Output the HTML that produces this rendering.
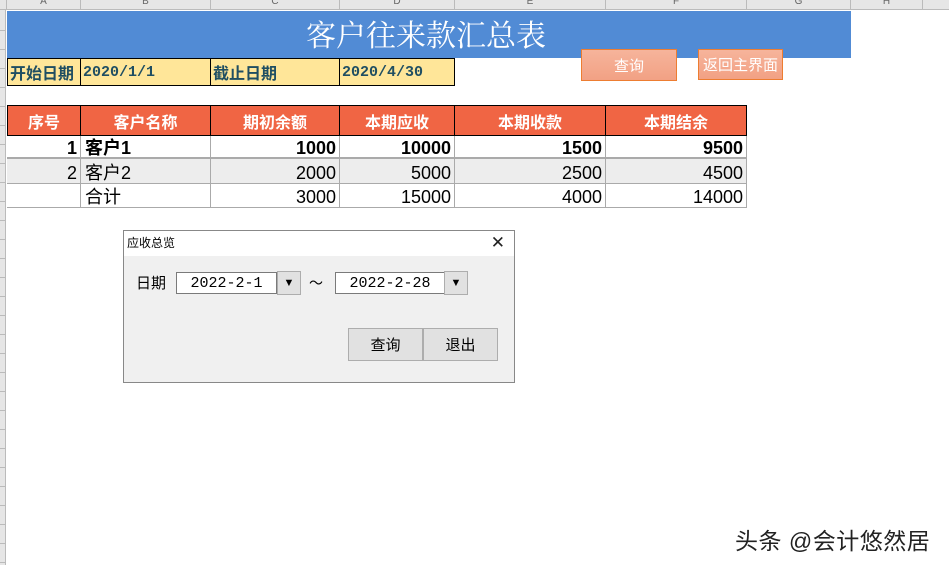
<!DOCTYPE html>
<html><head><meta charset="utf-8"><style>
*{margin:0;padding:0;box-sizing:border-box}
body{width:949px;height:565px;overflow:hidden;background:#fff;position:relative;font-family:"Liberation Sans","Noto Sans CJK SC",sans-serif}
.a{position:absolute}
.colh{position:absolute;top:0;height:10px;background:#e6e6e6;border-right:1px solid #bbb;border-bottom:1px solid #bbb;font-size:10px;color:#666;text-align:center;line-height:4px;overflow:hidden}
.c{position:absolute;display:flex;align-items:center;white-space:nowrap}
.y{background:#ffe699;border:1px solid #000;color:#1f4e62;font-weight:bold;font-size:16px;padding-left:2px}
.h{background:#f06544;border:1px solid #000;color:#fff;font-weight:bold;font-size:16px;justify-content:center}
.d{border-right:1px solid #aaa;font-size:18px;color:#000;justify-content:flex-end;align-items:flex-end;padding-right:3px;line-height:20px}
.l{justify-content:flex-start;padding-left:4px}
.btn{position:absolute;background:linear-gradient(#f6b49b,#f2a184);border:1px solid #ed7d31;color:#fff;font-size:15px;display:flex;align-items:center;justify-content:center}
.wb{position:absolute;background:#e1e1e1;border:1px solid #adadad;font-size:15px;display:flex;align-items:center;justify-content:center;color:#000}
.in{position:absolute;background:#fff;border:1px solid #7a7a7a;font-size:14px;display:flex;align-items:center;justify-content:center;font-family:"Liberation Mono",monospace}
.dd{position:absolute;background:#e1e1e1;border:1px solid #adadad;font-size:11px;display:flex;align-items:center;justify-content:center}
</style></head><body>
<div class="colh" style="left:0;width:7px;background:#e6e6e6"></div>
<div class="colh" style="left:7px;width:74px">A</div>
<div class="colh" style="left:81px;width:130px">B</div>
<div class="colh" style="left:211px;width:129px">C</div>
<div class="colh" style="left:340px;width:115px">D</div>
<div class="colh" style="left:455px;width:151px">E</div>
<div class="colh" style="left:606px;width:141px">F</div>
<div class="colh" style="left:747px;width:104px">G</div>
<div class="colh" style="left:851px;width:72px">H</div>
<div class="colh" style="left:923px;width:30px"></div>
<div class="a" style="left:0;top:10px;width:6px;height:555px;background:#e6e6e6;border-right:1px solid #bbb;background-image:repeating-linear-gradient(#e6e6e6 0,#e6e6e6 18px,#bbb 18px,#bbb 19px);background-position:0 2px"></div>

<div class="a" style="left:7px;top:11px;width:844px;height:47px;background:#518bd5;color:#fff;font-family:'Liberation Serif','Noto Serif CJK SC',serif;font-size:30px;text-align:center;line-height:52px;padding-right:6px">客户往来款汇总表</div>

<div class="c y" style="left:7px;top:58px;width:74px;height:28px">开始日期</div>
<div class="c y" style="left:80px;top:58px;width:131px;height:28px;font-family:'Liberation Mono',monospace;font-size:15px">2020/1/1</div>
<div class="c y" style="left:210px;top:58px;width:130px;height:28px">截止日期</div>
<div class="c y" style="left:339px;top:58px;width:116px;height:28px;font-family:'Liberation Mono',monospace;font-size:15px">2020/4/30</div>

<div class="btn" style="left:581px;top:49px;width:96px;height:32px">查询</div>
<div class="btn" style="left:698px;top:49px;width:85px;height:31px">返回主界面</div>

<div class="c h" style="left:7px;top:105px;width:74px;height:31px">序号</div>
<div class="c h" style="left:80px;top:105px;width:131px;height:31px">客户名称</div>
<div class="c h" style="left:210px;top:105px;width:130px;height:31px">期初余额</div>
<div class="c h" style="left:339px;top:105px;width:116px;height:31px">本期应收</div>
<div class="c h" style="left:454px;top:105px;width:152px;height:31px">本期收款</div>
<div class="c h" style="left:605px;top:105px;width:142px;height:31px">本期结余</div>

<div class="a" style="left:7px;top:136px;width:740px;height:23px;border-bottom:2px solid #aaa;font-weight:bold">
<div class="c d" style="left:0;width:74px;height:22px;font-weight:bold">1</div>
<div class="c d l" style="left:74px;width:130px;height:22px;font-weight:bold">客户1</div>
<div class="c d" style="left:204px;width:129px;height:22px;font-weight:bold">1000</div>
<div class="c d" style="left:333px;width:115px;height:22px;font-weight:bold">10000</div>
<div class="c d" style="left:448px;width:151px;height:22px;font-weight:bold">1500</div>
<div class="c d" style="left:599px;width:141px;height:22px;font-weight:bold">9500</div>
</div>
<div class="a" style="left:7px;top:159px;width:740px;height:25px;background:#ededed;border-bottom:1px solid #aaa">
<div class="c d" style="left:0;width:74px;height:24px">2</div>
<div class="c d l" style="left:74px;width:130px;height:24px">客户2</div>
<div class="c d" style="left:204px;width:129px;height:24px">2000</div>
<div class="c d" style="left:333px;width:115px;height:24px">5000</div>
<div class="c d" style="left:448px;width:151px;height:24px">2500</div>
<div class="c d" style="left:599px;width:141px;height:24px">4500</div>
</div>
<div class="a" style="left:7px;top:184px;width:740px;height:24px;border-bottom:1px solid #aaa">
<div class="c d" style="left:0;width:74px;height:23px"></div>
<div class="c d l" style="left:74px;width:130px;height:23px">合计</div>
<div class="c d" style="left:204px;width:129px;height:23px">3000</div>
<div class="c d" style="left:333px;width:115px;height:23px">15000</div>
<div class="c d" style="left:448px;width:151px;height:23px">4000</div>
<div class="c d" style="left:599px;width:141px;height:23px">14000</div>
</div>

<div class="a" style="left:123px;top:230px;width:392px;height:153px;border:1px solid #888;background:#f0f0f0">
<div class="a" style="left:0;top:0;width:390px;height:25px;background:#fff;font-size:12px;line-height:24px;padding-left:3px">应收总览<span class="a" style="right:9px;top:0;font-size:17px;line-height:24px;color:#222">✕</span></div>
<div class="a" style="left:12px;top:41px;font-size:15px">日期</div>
<div class="in" style="left:52px;top:41px;width:101px;height:22px;font-size:15px">2022-2-1</div>
<div class="dd" style="left:153px;top:40px;width:24px;height:24px">▼</div>
<div class="a" style="left:185px;top:42px;font-size:14px">～</div>
<div class="in" style="left:211px;top:41px;width:110px;height:22px;font-size:15px">2022-2-28</div>
<div class="dd" style="left:320px;top:40px;width:24px;height:24px">▼</div>
<div class="wb" style="left:224px;top:97px;width:75px;height:33px">查询</div>
<div class="wb" style="left:299px;top:97px;width:75px;height:33px">退出</div>
</div>

<div class="a" style="left:735px;top:522px;font-size:23px;color:#222;letter-spacing:0.5px">头条 @会计悠然居</div>
</body></html>
